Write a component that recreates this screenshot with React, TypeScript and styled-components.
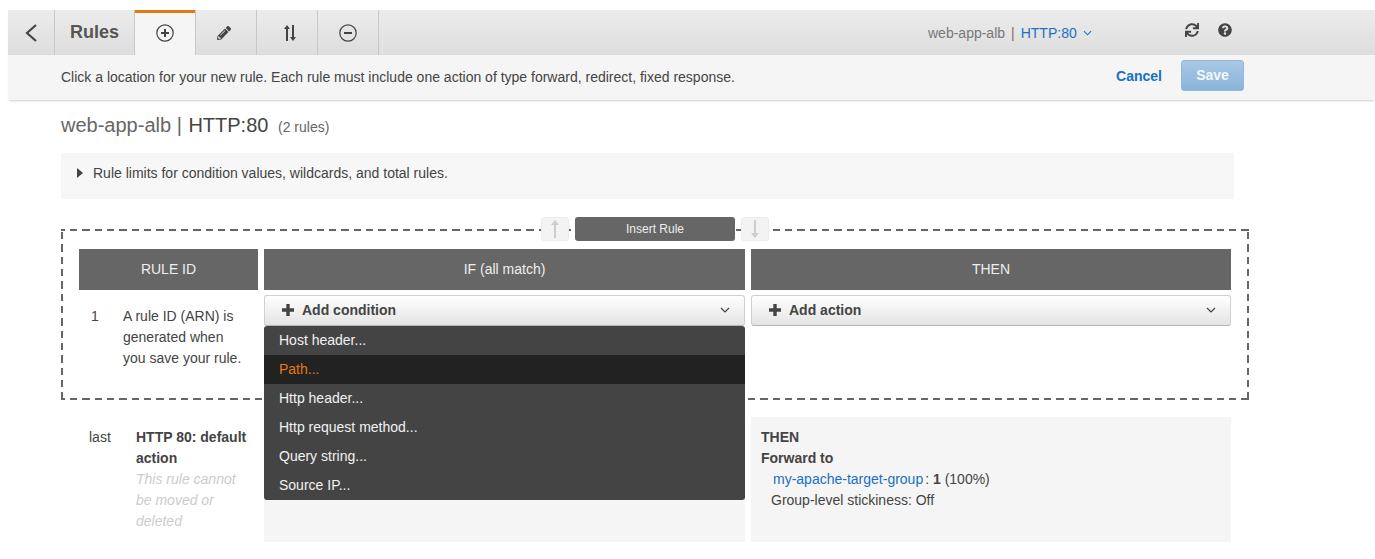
import React from "react";
import styled, { createGlobalStyle } from "styled-components";
import { FaPencilAlt, FaSync, FaQuestionCircle } from "react-icons/fa";

const Global = createGlobalStyle`
  html, body { margin: 0; padding: 0; background: #fff; }
  body { font-family: "Liberation Sans", Arial, sans-serif; font-size: 14px; color: #444; overflow: hidden; }
`;

const Page = styled.div`
  height: 559px;
  padding-top: 10px;
  box-sizing: border-box;
  overflow: hidden;
`;

const Header = styled.header`
  margin-left: 8px;
  box-shadow: 0 2px 2px -1px rgba(0, 0, 0, 0.2);
`;

const TabBar = styled.nav`
  display: flex;
  height: 45px;
  background: linear-gradient(#ececec, #dddddd);
`;

const Tab = styled.div<{ $w: number; $active?: boolean; $gap?: number; $pr?: number; $pl?: number }>`
  width: ${(p) => p.$w}px;
  margin-right: ${(p) => p.$gap ?? 4}px;
  box-sizing: border-box;
  display: flex;
  align-items: center;
  justify-content: center;
  color: #444;
  background: ${(p) => (p.$active ? "#f5f5f5" : "linear-gradient(#ececec, #dddddd)")};
  border-top: ${(p) => (p.$active ? "3px solid #e47911" : "none")};
  padding: ${(p) => (p.$active ? "0 0 3px" : `0 ${p.$pr ?? 0}px 0 ${p.$pl ?? 0}px`)};
  box-shadow: 1px 0 0 #c8c8c8;
`;

const RulesTitle = styled.span`
  font-size: 18px;
  font-weight: bold;
  color: #555;
`;

const TabFill = styled.div`
  flex: 1;
  display: flex;
  align-items: center;
  padding-left: 546px;
  box-shadow: inset 1px 0 0 #e8e8e8;
`;

const Crumb = styled.span`
  font-size: 14px;
  color: #777;
`;

const CrumbLink = styled.span`
  color: #1a6fc4;
  margin-left: 6px;
`;

const Pipe = styled.span`
  margin-left: 6px;
  color: #8a6d4b;
`;

const CrumbChevron = styled.svg`
  margin-left: 6px;
  width: 9px;
  height: 6px;
`;

const ToolIcons = styled.div`
  display: flex;
  align-items: center;
  gap: 19px;
  margin-left: 93px;
  color: #444;
  font-size: 14px;
  padding-bottom: 5px;
`;

const ActionBar = styled.div`
  height: 45px;
  display: flex;
  align-items: center;
  padding: 0 131px 0 53px;
  background: #f5f5f5;
`;

const Hint = styled.span`
  margin-top: -1px;
  color: #444;
  font-size: 14px;
`;

const Cancel = styled.a`
  margin-left: auto;
  margin-top: -3px;
  font-weight: bold;
  color: #1a6fc4;
`;

const Save = styled.button`
  margin-left: 19px;
  margin-top: -5px;
  width: 63px;
  height: 31px;
  border: 1px solid #92b8dc;
  border-radius: 3px;
  background: linear-gradient(#a9c8e6, #8ab3da);
  color: #f4f8fc;
  font: bold 14px "Liberation Sans", Arial, sans-serif;
`;

const Content = styled.main`
  padding: 14px 0 0 61px;
`;

const Title = styled.h1`
  margin: 0;
  font-size: 20px;
  font-weight: normal;
  line-height: 23px;
  color: #666;
`;

const TitleStrong = styled.span`
  margin-left: 1px;
  color: #444;
`;

const TitleCount = styled.small`
  margin-left: 4px;
  font-size: 14px;
  color: #666;
`;

const Limits = styled.div`
  width: 1173px;
  height: 46px;
  margin-top: 14px;
  padding: 12px 0 0 16px;
  box-sizing: border-box;
  display: flex;
  align-items: flex-start;
  gap: 10px;
  line-height: 16px;
  background: #f7f7f7;
`;

const Caret = styled.svg`
  width: 6px;
  height: 10px;
  margin-top: 3px;
`;

const hDash = "repeating-linear-gradient(90deg, #666 0 4px, transparent 4px 9px, #666 9px 12.33px)";
const vDash = "repeating-linear-gradient(180deg, transparent 0 3px, #666 3px 10.33px, transparent 10.33px 12.33px)";

const InsertBox = styled.section`
  position: relative;
  width: 1188px;
  height: 171px;
  margin-top: 30px;
  padding: 20px 2px 2px 18px;
  box-sizing: border-box;
  background-image: ${hDash}, ${hDash}, ${vDash}, ${vDash};
  background-repeat: no-repeat;
  background-size: 100% 2px, 100% 2px, 2px 100%, 2px 100%;
  background-position: 0 0, 0 100%, 0 0, 100% 0;
`;

const InsertTools = styled.div`
  position: absolute;
  top: -12px;
  left: 480px;
  display: flex;
  gap: 6px;
`;

const ArrowButton = styled.div`
  width: 28px;
  height: 24px;
  box-sizing: border-box;
  border: 1px solid #ececec;
  border-radius: 3px;
  background: #f3f3f3;
  display: flex;
  align-items: center;
  justify-content: center;
`;

const InsertLabel = styled.div`
  width: 160px;
  height: 24px;
  border-radius: 3px;
  background: #666;
  color: #eee;
  font-size: 12px;
  line-height: 24px;
  text-align: center;
`;

const Columns = styled.div`
  display: grid;
  grid-template-columns: 179px 481px 480px;
  column-gap: 6px;
`;

const HeadCell = styled.div`
  height: 41px;
  background: #666;
  color: #eee;
  font-size: 14px;
  line-height: 41px;
  text-align: center;
`;

const IdCell = styled.div`
  display: grid;
  grid-template-columns: 32px 122px;
  padding: 16px 0 0 12px;
  line-height: 21px;
`;

const SlotCell = styled.div`
  position: relative;
  margin-top: 5px;
`;

const Select = styled.div`
  height: 31px;
  box-sizing: border-box;
  display: flex;
  align-items: center;
  padding: 0 14px 1px 17px;
  border: 1px solid #d0d0d0;
  border-bottom-color: #b5b5b5;
  border-radius: 3px;
  background: linear-gradient(#ffffff, #e4e4e4);
  font-weight: bold;
  color: #444;
`;

const SelectPlus = styled.svg`
  width: 12px;
  height: 12px;
  margin-right: 8px;
`;

const SelectChevron = styled.svg`
  margin-left: auto;
  width: 10px;
  height: 6px;
`;

const Menu = styled.ul`
  position: absolute;
  top: 31px;
  left: 0;
  right: 0;
  z-index: 5;
  margin: 0;
  padding: 0;
  list-style: none;
  background: #444;
  border-radius: 3px;
  overflow: hidden;
`;

const MenuItem = styled.li<{ $hot?: boolean }>`
  height: 29px;
  line-height: 28px;
  padding-left: 15px;
  font-size: 14px;
  background: ${(p) => (p.$hot ? "#222" : "transparent")};
  color: ${(p) => (p.$hot ? "#e47911" : "#f2f2f2")};
`;

const DefaultRow = styled(Columns)`
  margin: 17px 0 0 18px;
  height: 125px;
`;

const LastCell = styled.div`
  display: grid;
  grid-template-columns: 47px 112px;
  padding: 10px 0 0 10px;
  line-height: 21px;
`;

const RuleName = styled.div`
  font-weight: bold;
  color: #444;
`;

const RuleNote = styled.div`
  font-style: italic;
  color: #ccc;
`;

const GrayCell = styled.div`
  background: #f5f5f5;
`;

const ThenCell = styled(GrayCell)`
  padding: 10px 0 0 10px;
  line-height: 21px;
`;

const Bold = styled.div`
  font-weight: bold;
`;

const TargetLine = styled.div`
  padding-left: 12px;
`;

const StickyLine = styled.div`
  padding-left: 10px;
`;

const TargetLink = styled.a`
  color: #1a6fc4;
  margin-right: 2px;
`;

const Chevron = ({ as: C, color }: { as: typeof CrumbChevron; color: string }) => (
  <C viewBox="0 0 10 6" fill="none" stroke={color} strokeWidth="1.2">
    <path d="M1 1l4 4 4-4" />
  </C>
);

const PlusGlyph = () => (
  <SelectPlus viewBox="0 0 12 12" fill="none" stroke="#444" strokeWidth="3.4">
    <path d="M6 0v12M0 6h12" />
  </SelectPlus>
);

const CirclePlus = () => (
  <svg width="18" height="18" viewBox="0 0 18 18" fill="none" stroke="#444" strokeWidth="1.2">
    <circle cx="9" cy="9" r="8.2" />
    <path d="M9 5v8M5 9h8" strokeWidth="2" />
  </svg>
);

const CircleMinus = () => (
  <svg width="18" height="18" viewBox="0 0 18 18" fill="none" stroke="#444" strokeWidth="1.2">
    <circle cx="9" cy="9" r="8.2" />
    <path d="M5 9h8" strokeWidth="2" />
  </svg>
);

const SortArrows = () => (
  <svg width="12" height="16" viewBox="0 0 12 16" fill="#444">
    <path d="M3 0l3 4H4v12H2V4H0z" />
    <path d="M9 16l3-4h-2V0H8v12H6z" />
  </svg>
);

const ThinArrow = ({ down }: { down?: boolean }) => (
  <svg width="10" height="18" viewBox="0 0 10 18" fill="#ccc" style={down ? { transform: "rotate(180deg)" } : undefined}>
    <path d="M5 0l4 5H6v13H4V5H1z" />
  </svg>
);

const menuItems = ["Host header...", "Path...", "Http header...", "Http request method...", "Query string...", "Source IP..."];

export default function App() {
  return (
    <Page>
      <Global />
      <Header>
        <TabBar>
          <Tab $w={46}>
            <svg width="12" height="18" viewBox="0 0 12 18" fill="none" stroke="#444" strokeWidth="2.2">
              <path d="M11 1L2 9l9 8" />
            </svg>
          </Tab>
          <Tab $w={76} $gap={1} $pr={3}><RulesTitle>Rules</RulesTitle></Tab>
          <Tab $w={60} $active><CirclePlus /></Tab>
          <Tab $w={57} $pr={7}><FaPencilAlt size={14} /></Tab>
          <Tab $w={57} $pl={2}><SortArrows /></Tab>
          <Tab $w={57} $pr={3}><CircleMinus /></Tab>
          <TabFill>
            <Crumb>web-app-alb</Crumb>
            <Pipe>|</Pipe>
            <CrumbLink>HTTP:80</CrumbLink>
            <Chevron as={CrumbChevron} color="#1a6fc4" />
            <ToolIcons>
              <FaSync size={14} />
              <FaQuestionCircle size={14} />
            </ToolIcons>
          </TabFill>
        </TabBar>
        <ActionBar>
          <Hint>Click a location for your new rule. Each rule must include one action of type forward, redirect, fixed response.</Hint>
          <Cancel>Cancel</Cancel>
          <Save>Save</Save>
        </ActionBar>
      </Header>
      <Content>
        <Title>
          web-app-alb | <TitleStrong>HTTP:80</TitleStrong> <TitleCount>(2 rules)</TitleCount>
        </Title>
        <Limits>
          <Caret viewBox="0 0 6 10" fill="#444"><path d="M0 0l6 5-6 5z" /></Caret>
          Rule limits for condition values, wildcards, and total rules.
        </Limits>
        <InsertBox>
          <InsertTools>
            <ArrowButton><ThinArrow /></ArrowButton>
            <InsertLabel>Insert Rule</InsertLabel>
            <ArrowButton><ThinArrow down /></ArrowButton>
          </InsertTools>
          <Columns>
            <HeadCell>RULE ID</HeadCell>
            <HeadCell>IF (all match)</HeadCell>
            <HeadCell>THEN</HeadCell>
            <IdCell>
              <span>1</span>
              <span>A rule ID (ARN) is generated when you save your rule.</span>
            </IdCell>
            <SlotCell>
              <Select>
                <PlusGlyph />
                Add condition
                <Chevron as={SelectChevron} color="#444" />
              </Select>
              <Menu>
                {menuItems.map((m) => (
                  <MenuItem key={m} $hot={m === "Path..."}>{m}</MenuItem>
                ))}
              </Menu>
            </SlotCell>
            <SlotCell>
              <Select>
                <PlusGlyph />
                Add action
                <Chevron as={SelectChevron} color="#444" />
              </Select>
            </SlotCell>
          </Columns>
        </InsertBox>
        <DefaultRow>
          <LastCell>
            <span>last</span>
            <div>
              <RuleName>HTTP 80: default action</RuleName>
              <RuleNote>This rule cannot be moved or deleted</RuleNote>
            </div>
          </LastCell>
          <GrayCell />
          <ThenCell>
            <Bold>THEN</Bold>
            <Bold>Forward to</Bold>
            <TargetLine><TargetLink>my-apache-target-group</TargetLink>: <b>1</b> (100%)</TargetLine>
            <StickyLine>Group-level stickiness: Off</StickyLine>
          </ThenCell>
        </DefaultRow>
      </Content>
    </Page>
  );
}
